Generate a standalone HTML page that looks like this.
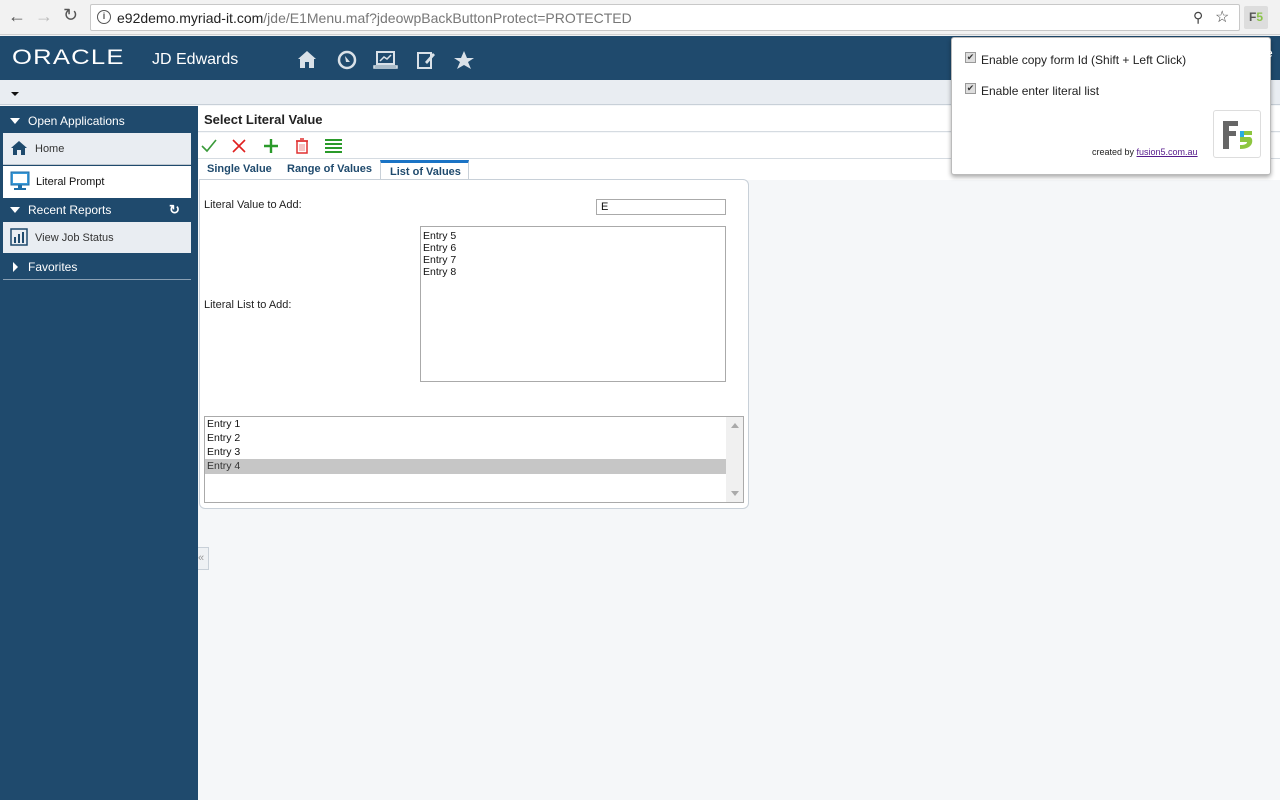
<!DOCTYPE html>
<html><head><meta charset="utf-8"><style>
*{box-sizing:border-box;margin:0;padding:0}
body{width:1280px;height:800px;overflow:hidden;font-family:"Liberation Sans",Arial,sans-serif;background:#f5f7f9;position:relative}
.abs{position:absolute}
</style></head><body>
<!-- browser chrome -->
<div class="abs" style="left:0;top:0;width:1280px;height:35px;background:#f2f2f2;border-bottom:1px solid #d0d0d0"></div>
<div class="abs" style="left:8px;top:6px;font-size:18px;color:#555">&#8592;</div>
<div class="abs" style="left:35px;top:6px;font-size:18px;color:#bbb">&#8594;</div>
<div class="abs" style="left:63px;top:5px;font-size:18px;color:#555">&#8635;</div>
<div class="abs" style="left:90px;top:4px;width:1150px;height:27px;background:#fff;border:1px solid #c8c8c8;border-radius:2px"></div>
<div class="abs" style="left:97px;top:10px;width:14px;height:14px;border:1.5px solid #555;border-radius:50%;font-size:9px;text-align:center;line-height:11px;color:#555;font-weight:bold">i</div>
<div class="abs" style="left:117px;top:10px;font-size:14px;color:#222">e92demo.myriad-it.com<span style="color:#777">/jde/E1Menu.maf?jdeowpBackButtonProtect=PROTECTED</span></div>
<div class="abs" style="left:1193px;top:9px;font-size:14px;color:#444">&#9906;</div>
<div class="abs" style="left:1215px;top:7px;font-size:16px;color:#444">&#9734;</div>
<div class="abs" style="left:1244px;top:6px;width:24px;height:23px;background:#ddd;border-radius:2px;font-size:12px;font-weight:bold;color:#555;text-align:center;line-height:23px">F<span style="color:#8bc34a">5</span></div>
<!-- header -->
<div class="abs" style="left:0;top:36px;width:1280px;height:44px;background:#1f4a6d;box-shadow:0 2px 3px rgba(0,0,0,.4)"></div>
<div class="abs" style="left:12px;top:46px;font-size:21px;color:#fff;letter-spacing:1px;transform:scaleX(1.22);transform-origin:left">ORACLE</div>
<div class="abs" style="left:152px;top:51px;font-size:16px;color:#fff">JD Edwards</div>
<svg class="abs" style="left:296px;top:48px" width="185" height="24" viewBox="0 0 185 24" fill="#d9e1e8">
<path d="M2 11 L11 3 L20 11 L18 11 L18 20 L13 20 L13 14 L9 14 L9 20 L4 20 L4 11Z"/>
<circle cx="51" cy="12" r="8" fill="none" stroke="#d9e1e8" stroke-width="2.5"/><path d="M49 8 L54 14 L50 14Z"/>
<rect x="81" y="4" width="17" height="12" fill="none" stroke="#d9e1e8" stroke-width="2"/><path d="M78 18 H101 V20 H78Z M84 13 L88 9 L91 11 L95 7" stroke="#d9e1e8" stroke-width="1.5" fill="none"/>
<rect x="122" y="5" width="13" height="15" fill="none" stroke="#d9e1e8" stroke-width="2"/><path d="M129 14 L137 5 L139 7 L131 16Z"/>
<path d="M168 3 L171 10 L178 10 L172 14 L175 21 L168 17 L161 21 L164 14 L158 10 L165 10Z"/>
</svg>
<!-- subbar -->
<div class="abs" style="left:0;top:80px;width:1280px;height:25px;background:#e9edf2;border-bottom:1px solid #c8d0d8"></div>
<div class="abs" style="left:11px;top:92px;width:0;height:0;border-left:4px solid transparent;border-right:4px solid transparent;border-top:4px solid #111"></div>
<!-- sidebar -->
<div class="abs" style="left:0;top:106px;width:198px;height:694px;background:#1f4a6d"></div>
<div class="abs" style="left:10px;top:118px;border-left:5px solid transparent;border-right:5px solid transparent;border-top:6px solid #fff"></div>
<div class="abs" style="left:28px;top:114px;font-size:12px;color:#fff">Open Applications</div>
<div class="abs" style="left:3px;top:133px;width:188px;height:32px;background:#e9edf2;border-bottom:1px solid #c0c8d0"></div>
<svg class="abs" style="left:10px;top:140px" width="18" height="16"><path d="M1 8 L9 1 L17 8 L15 8 L15 15 L11 15 L11 10 L7 10 L7 15 L3 15 L3 8Z" fill="#1f4a6d"/></svg>
<div class="abs" style="left:35px;top:143px;font-size:11px;color:#333">Home</div>
<div class="abs" style="left:3px;top:166px;width:188px;height:32px;background:#fff"></div>
<svg class="abs" style="left:10px;top:171px" width="20" height="20"><rect x="1" y="1" width="18" height="13" fill="#3a9ad9" stroke="#1f6ea8"/><rect x="3" y="3" width="14" height="9" fill="#fff"/><rect x="8" y="14" width="4" height="3" fill="#1f6ea8"/><rect x="4" y="17" width="12" height="2" fill="#1f6ea8"/></svg>
<div class="abs" style="left:36px;top:176px;font-size:11px;color:#111">Literal Prompt</div>
<div class="abs" style="left:10px;top:207px;border-left:5px solid transparent;border-right:5px solid transparent;border-top:6px solid #fff"></div>
<div class="abs" style="left:28px;top:203px;font-size:12px;color:#fff">Recent Reports</div>
<div class="abs" style="left:169px;top:202px;font-size:13px;color:#fff;font-weight:bold">&#8635;</div>
<div class="abs" style="left:3px;top:222px;width:188px;height:31px;background:#e9edf2"></div>
<svg class="abs" style="left:10px;top:228px" width="18" height="18"><rect x="1" y="1" width="16" height="16" fill="none" stroke="#1f4a6d" stroke-width="1.5"/><rect x="4" y="9" width="2" height="6" fill="#1f4a6d"/><rect x="8" y="6" width="2" height="9" fill="#1f4a6d"/><rect x="12" y="4" width="2" height="11" fill="#1f4a6d"/></svg>
<div class="abs" style="left:35px;top:232px;font-size:11px;color:#333">View Job Status</div>
<div class="abs" style="left:13px;top:262px;border-top:5px solid transparent;border-bottom:5px solid transparent;border-left:5px solid #fff"></div>
<div class="abs" style="left:28px;top:260px;font-size:12px;color:#fff">Favorites</div>
<div class="abs" style="left:3px;top:279px;width:188px;height:1px;background:#8aa0b4"></div>
<!-- form -->
<div class="abs" style="left:198px;top:106px;width:1082px;height:26px;background:#fff;border-bottom:1px solid #d5dbe1"></div>
<div class="abs" style="left:204px;top:112px;font-size:13px;font-weight:bold;color:#222">Select Literal Value</div>
<div class="abs" style="left:198px;top:133px;width:1082px;height:26px;background:#fff;border-bottom:1px solid #d5dbe1"></div>
<svg class="abs" style="left:200px;top:137px" width="145" height="18">
<path d="M2 9 L7 14 L16 3" stroke="#3a9a3a" stroke-width="1.6" fill="none"/>
<path d="M33 3 L45 15 M45 3 L33 15" stroke="#e02020" stroke-width="1.6"/>
<path d="M71 2 V16 M64 9 H78" stroke="#2a9a2a" stroke-width="2.4"/>
<rect x="97" y="4" width="10" height="12" fill="none" stroke="#e03030" stroke-width="1.5"/><path d="M96 4 H108 M100 2 H104" stroke="#e03030" stroke-width="1.5"/><path d="M100 7 V14 M102 7 V14 M104 7 V14" stroke="#e88" stroke-width="1"/>
<path d="M125 3 H142 M125 7 H142 M125 11 H142 M125 15 H142" stroke="#2a9a2a" stroke-width="2"/>
</svg>
<div class="abs" style="left:198px;top:159px;width:1082px;height:21px;background:#fff"></div>
<div class="abs" style="left:207px;top:163px;font-size:11px;font-weight:bold;color:#1f4a6d">Single Value</div>
<div class="abs" style="left:287px;top:163px;font-size:11px;font-weight:bold;color:#1f4a6d">Range of Values</div>
<div class="abs" style="left:380px;top:160px;width:89px;height:20px;background:#fff;border:1px solid #c8d0d8;border-top:3px solid #1a73c5;border-bottom:none;font-size:11px;font-weight:bold;color:#1f4a6d;padding:3px 0 0 9px">List of Values</div>
<div class="abs" style="left:199px;top:179px;width:550px;height:330px;background:#fff;border:1px solid #c8d0d8;border-radius:0 6px 6px 6px"></div>
<div class="abs" style="left:204px;top:199px;font-size:11px;color:#222">Literal Value to Add:</div>
<div class="abs" style="left:596px;top:199px;width:130px;height:16px;border:1px solid #aaa;font-size:11px;padding:1px 4px;color:#111">E</div>
<div class="abs" style="left:420px;top:226px;width:306px;height:156px;border:1px solid #aaa;font-size:10.5px;line-height:12px;padding:3px 2px;color:#111">Entry 5<br>Entry 6<br>Entry 7<br>Entry 8</div>
<div class="abs" style="left:204px;top:299px;font-size:11px;color:#222">Literal List to Add:</div>
<div class="abs" style="left:204px;top:416px;width:540px;height:87px;border:1px solid #aaa;background:#fff"></div>
<div class="abs" style="left:726px;top:417px;width:17px;height:85px;background:#f0f0f0"></div>
<div class="abs" style="left:731px;top:423px;border-left:4px solid transparent;border-right:4px solid transparent;border-bottom:5px solid #aaa"></div>
<div class="abs" style="left:731px;top:491px;border-left:4px solid transparent;border-right:4px solid transparent;border-top:5px solid #aaa"></div>
<div class="abs" style="left:205px;top:459px;width:521px;height:15px;background:#c6c6c6"></div>
<div class="abs" style="left:207px;top:417px;font-size:10.5px;line-height:14px;color:#111">Entry 1<br>Entry 2<br>Entry 3<br><span style="color:#333">Entry 4</span></div>
<div class="abs" style="left:198px;top:547px;width:11px;height:23px;background:#eef1f4;border:1px solid #c8d0d8;border-left:none;font-size:11px;color:#999;line-height:20px">«</div>
<!-- popup -->
<div class="abs" style="left:951px;top:37px;width:320px;height:138px;background:#fff;border:1px solid #bbb;border-radius:3px;box-shadow:0 2px 5px rgba(0,0,0,.35)"></div>
<div class="abs" style="left:1266px;top:46px;font-size:12px;color:#fff">e</div>
<div class="abs" style="left:965px;top:52px;width:11px;height:11px;background:#ddd;border:1px solid #999;font-size:9px;line-height:9px;text-align:center;color:#333">✔</div>
<div class="abs" style="left:981px;top:53px;font-size:12px;color:#222">Enable copy form Id (Shift + Left Click)</div>
<div class="abs" style="left:965px;top:83px;width:11px;height:11px;background:#ddd;border:1px solid #999;font-size:9px;line-height:9px;text-align:center;color:#333">✔</div>
<div class="abs" style="left:981px;top:84px;font-size:12px;color:#222">Enable enter literal list</div>
<div class="abs" style="left:1092px;top:147px;font-size:9px;color:#222">created by <span style="color:#551a8b;text-decoration:underline">fusion5.com.au</span></div>
<div class="abs" style="left:1213px;top:110px;width:48px;height:48px;border:1px solid #ddd;border-radius:3px;background:#fff"></div>
<svg class="abs" style="left:1220px;top:117px" width="36" height="36"><path d="M3 4 H18 V9 H9 V14 H16 V19 H9 V32 H3Z" fill="#666"/><path d="M20 14 H32 V18 H24 V20 H30 Q33 21 32 26 Q30 32 20 32 V28 Q27 28 27 25 H20Z" fill="#8dc63f"/><path d="M20 14 H24 V20 H20Z" fill="#29abe2"/></svg>
</body></html>
